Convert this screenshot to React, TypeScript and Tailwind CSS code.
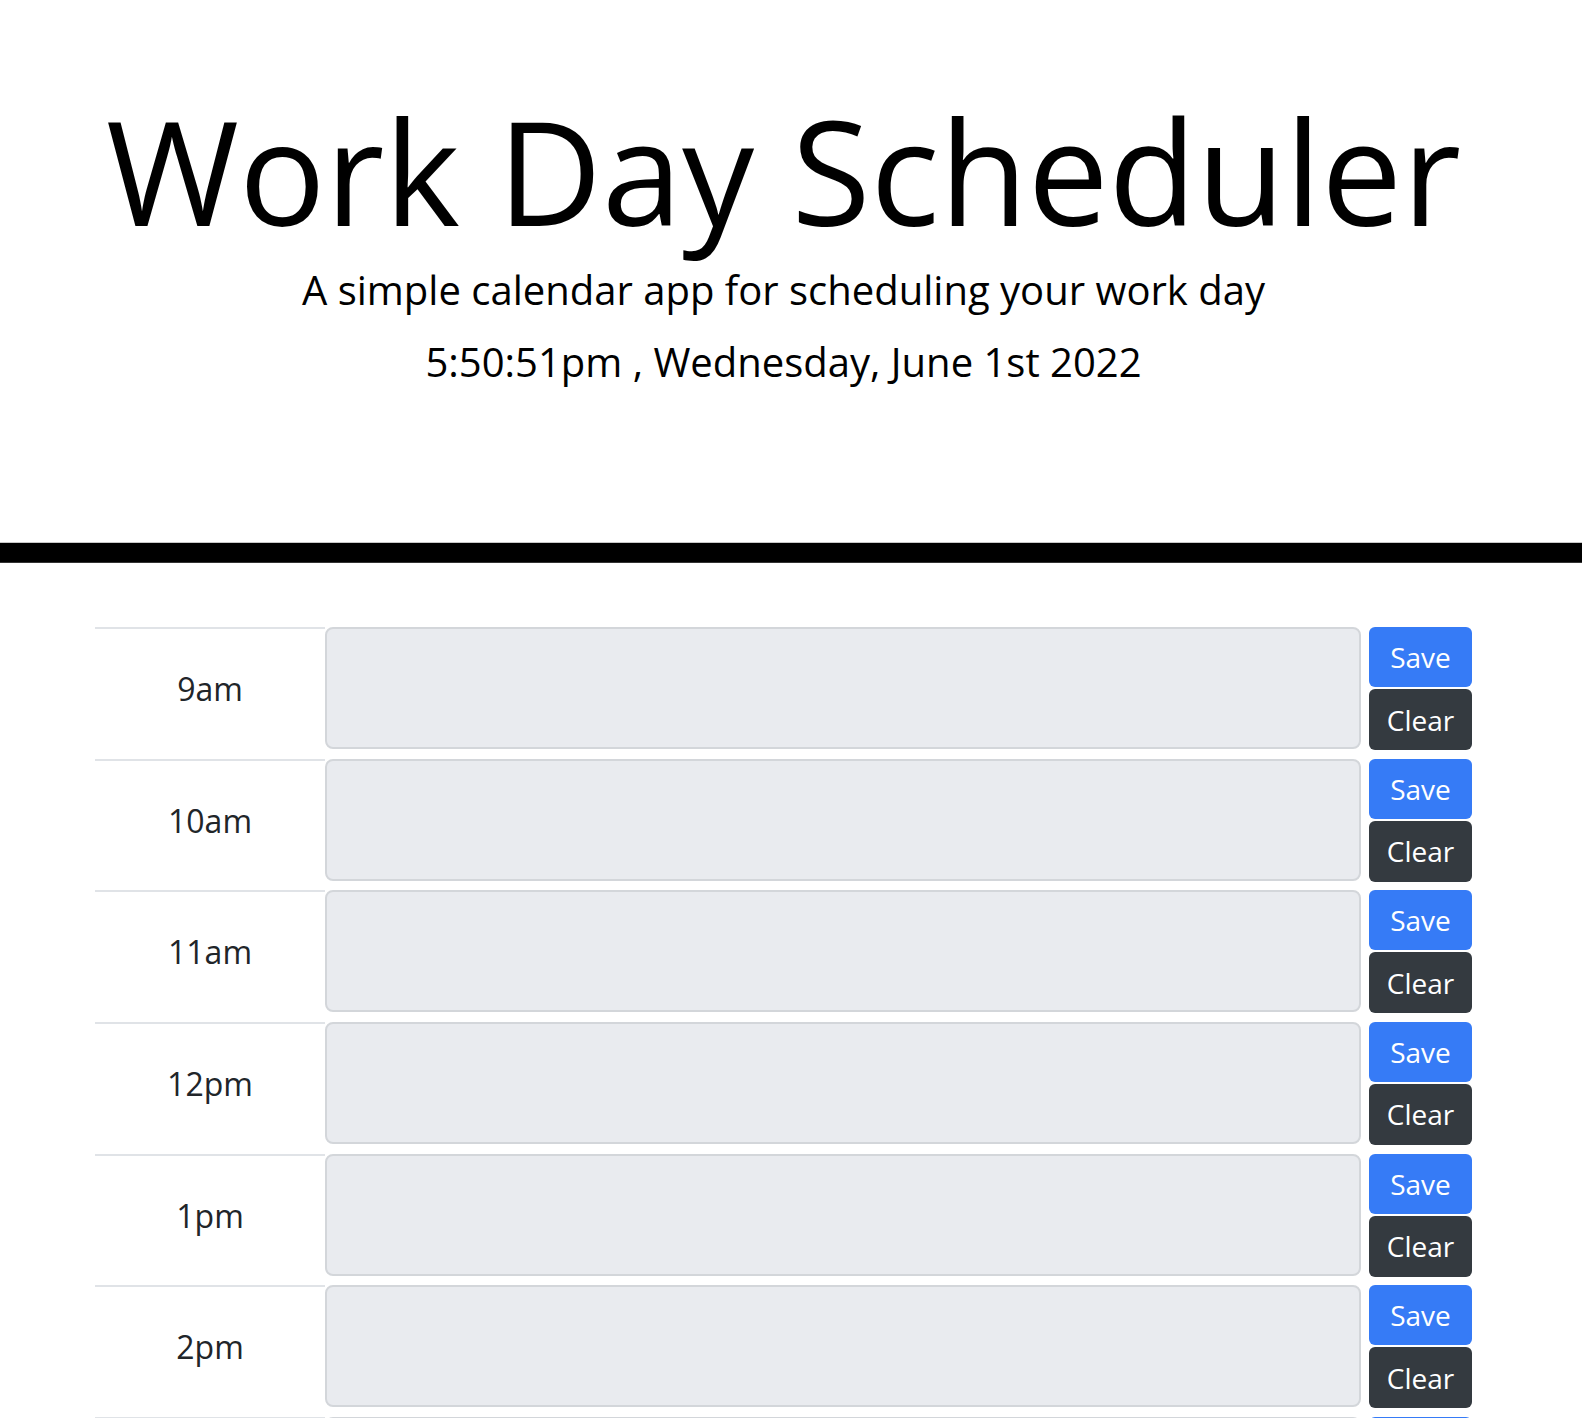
const hours = ["9am", "10am", "11am", "12pm", "1pm", "2pm", "3pm", "4pm", "5pm"];

function HourRow({ label }: { label: string }) {
  return (
    <div className="flex h-[131.67px] shrink-0">
      <div className="flex h-[122px] w-[230px] items-center justify-center border-t-2 border-[#e0e3e7] text-[32px] leading-[48px] text-[#212529]">
        {label}
      </div>
      <textarea className="h-[122px] w-[1036px] resize-none rounded-[8px] border-2 border-[#d3d6da] bg-[#e9ebef] outline-none" />
      <div className="ml-[8px] flex w-[103px] flex-col gap-[2px]">
        <button className="h-[60px] rounded-[6px] bg-[#367bf6] text-[28px] leading-none text-white">
          Save
        </button>
        <button className="h-[61px] rounded-[6px] bg-[#343a40] text-[28px] leading-none text-white">
          Clear
        </button>
      </div>
    </div>
  );
}

export default function App() {
  return (
    <div className="min-h-screen overflow-hidden bg-white font-['Open_Sans',sans-serif]">
      <header className="flex flex-col items-center pt-[91px] pr-[15px] text-black">
        <h1 className="text-[144px] leading-[158px]">Work Day Scheduler</h1>
        <p className="mt-[11px] text-[40px] leading-[60px]">
          A simple calendar app for scheduling your work day
        </p>
        <p className="mt-[12px] text-[40px] leading-[60px]">
          5:50:51pm , Wednesday, June 1st 2022
        </p>
      </header>

      <div className="mt-[150px] h-[21px] border-t border-b border-t-[#c8c8c8] border-b-[#333] bg-black" />

      <main className="mt-[64px] flex flex-col pl-[95px]">
        {hours.map((h) => (
          <HourRow key={h} label={h} />
        ))}
      </main>
    </div>
  );
}
